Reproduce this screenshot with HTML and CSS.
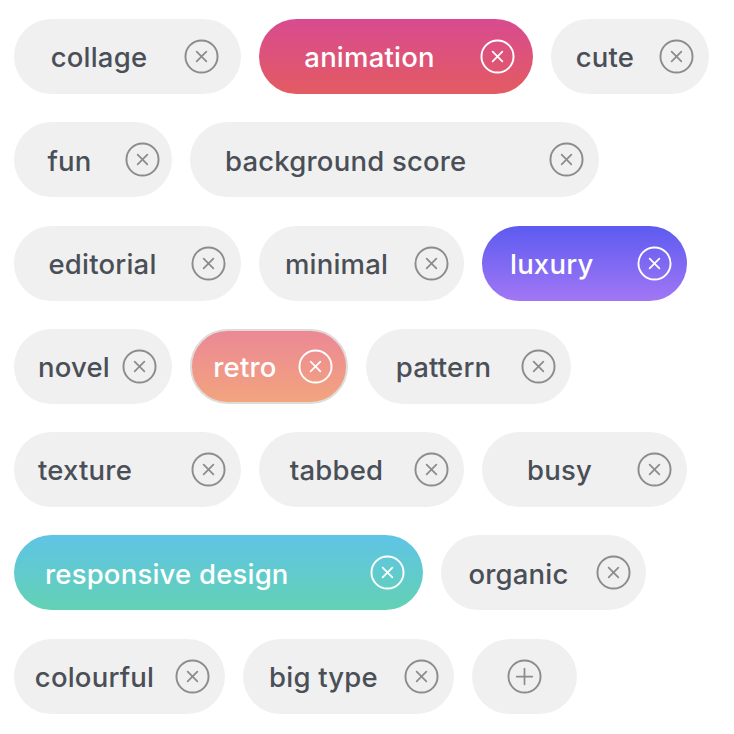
FILE: index.html
```html
<!DOCTYPE html>
<html lang="en">
<head>
<meta charset="utf-8">
<title>Tags</title>
<link rel="stylesheet" href="styles.css">
</head>
<body>
<svg width="0" height="0" class="defs" aria-hidden="true">
  <symbol id="ic-x" viewBox="0 0 36 36">
    <circle cx="18" cy="18" r="16.5" fill="none" stroke="currentColor" stroke-width="2"/>
    <path d="M13 13 L23 23 M23 13 L13 23" fill="none" stroke="currentColor" stroke-width="1.8" stroke-linecap="round"/>
  </symbol>
  <symbol id="ic-plus" viewBox="0 0 36 36">
    <circle cx="18" cy="18" r="16.5" fill="none" stroke="currentColor" stroke-width="2"/>
    <path d="M18 10 V26 M10 18 H26" fill="none" stroke="currentColor" stroke-width="1.8" stroke-linecap="round"/>
  </symbol>
</svg>
<main class="tags">
  <div class="row">
    <div class="chip w-lg pr-22"><span class="label">collage</span><svg class="icon"><use href="#ic-x"/></svg></div>
    <div class="chip w-xl pink pr-18"><span class="label">animation</span><svg class="icon"><use href="#ic-x"/></svg></div>
    <div class="chip w-sm"><span class="label">cute</span><svg class="icon"><use href="#ic-x"/></svg></div>
  </div>
  <div class="row">
    <div class="chip w-sm pr-12"><span class="label">fun</span><svg class="icon"><use href="#ic-x"/></svg></div>
    <div class="chip w-xxl start pl-35"><span class="label">background score</span><svg class="icon"><use href="#ic-x"/></svg></div>
  </div>
  <div class="row">
    <div class="chip w-lg"><span class="label">editorial</span><svg class="icon"><use href="#ic-x"/></svg></div>
    <div class="chip w-md"><span class="label">minimal</span><svg class="icon"><use href="#ic-x"/></svg></div>
    <div class="chip w-md violet start pl-28"><span class="label">luxury</span><svg class="icon"><use href="#ic-x"/></svg></div>
  </div>
  <div class="row">
    <div class="chip w-sm start pl-24"><span class="label">novel</span><svg class="icon"><use href="#ic-x"/></svg></div>
    <div class="chip w-sm peach"><span class="label">retro</span><svg class="icon"><use href="#ic-x"/></svg></div>
    <div class="chip w-md"><span class="label">pattern</span><svg class="icon"><use href="#ic-x"/></svg></div>
  </div>
  <div class="row">
    <div class="chip w-lg start pl-24"><span class="label">texture</span><svg class="icon"><use href="#ic-x"/></svg></div>
    <div class="chip w-md"><span class="label">tabbed</span><svg class="icon"><use href="#ic-x"/></svg></div>
    <div class="chip w-md"><span class="label">busy</span><svg class="icon"><use href="#ic-x"/></svg></div>
  </div>
  <div class="row">
    <div class="chip w-xxl teal start pl-31 pr-18"><span class="label">responsive design</span><svg class="icon"><use href="#ic-x"/></svg></div>
    <div class="chip w-md"><span class="label">organic</span><svg class="icon"><use href="#ic-x"/></svg></div>
  </div>
  <div class="row">
    <div class="chip w-mdl"><span class="label">colourful</span><svg class="icon"><use href="#ic-x"/></svg></div>
    <div class="chip w-mdl"><span class="label">big type</span><svg class="icon"><use href="#ic-x"/></svg></div>
    <div class="chip w-add add"><svg class="icon"><use href="#ic-plus"/></svg></div>
  </div>
</main>
</body>
</html>
```

FILE: styles.css
```css
html, body {
  margin: 0;
  padding: 0;
  background: #ffffff;
}

.defs {
  position: absolute;
  width: 0;
  height: 0;
  overflow: hidden;
}

.tags {
  display: flex;
  flex-direction: column;
  gap: 28.3px;
  padding: 19px 0 0 14px;
  font-family: Inter, "Liberation Sans", sans-serif;
}

.row {
  display: flex;
  gap: 18px;
}

.chip {
  box-sizing: border-box;
  height: 75px;
  border-radius: 38px;
  background: #f0f0f0;
  color: #4a4f57;
  display: flex;
  align-items: center;
  padding: 0 15px 0 0;
  flex: none;
}

.label {
  flex: 1;
  text-align: center;
  font-size: 27.5px;
  font-weight: 500;
  letter-spacing: 0.2px;
  white-space: nowrap;
  line-height: 1;
  padding-top: 3px;
}

.start .label { text-align: left; }
.pl-35 { padding-left: 35px; }
.pl-24 { padding-left: 24px; }
.pl-28 { padding-left: 28px; }
.pl-31 { padding-left: 31px; }
.pr-22 { padding-right: 22px; }
.pr-18 { padding-right: 18px; }
.pr-12 { padding-right: 12px; }

.icon {
  width: 35px;
  height: 35px;
  flex: none;
  color: #8c8c8c;
}

.w-sm { width: 158px; }
.w-md { width: 205px; }
.w-mdl { width: 211px; }
.w-lg { width: 227px; }
.w-xl { width: 274px; }
.w-xxl { width: 409px; }
.w-add { width: 105px; }

.add {
  justify-content: center;
  padding: 0;
}

.pink, .violet, .peach, .teal { color: #ffffff; }
.pink .icon, .violet .icon, .peach .icon, .teal .icon { color: #ffffff; }

.pink { background: linear-gradient(180deg, #d84b90 0%, #e35b62 100%); }
.violet { background: linear-gradient(180deg, #5d5bf0 0%, #a177f5 100%); }
.peach {
  background: linear-gradient(180deg, #ec8896 0%, #f2a47e 100%);
  border: 2px solid #dedbd9;
  padding-right: 13px;
}
.teal { background: linear-gradient(180deg, #5fc4e6 0%, #63d1b4 100%); }
```
